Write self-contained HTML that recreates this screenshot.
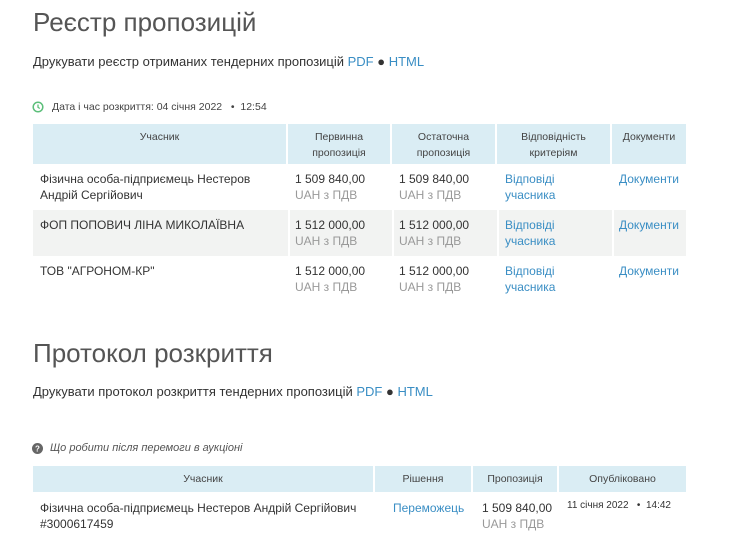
<!DOCTYPE html>
<html><head><meta charset="utf-8"><style>
body{margin:0;width:754px;height:557px;background:#fff;font-family:"Liberation Sans","DejaVu Sans",sans-serif;color:#333;position:relative;overflow:hidden}
.a{position:absolute;white-space:nowrap}
h1{position:absolute;margin:0;font-weight:normal;font-size:26px;color:#555;left:33px}
.l{color:#3a8ec4}
.c{position:absolute;box-sizing:border-box;font-size:12px;line-height:16px;white-space:nowrap}
.h{background:#daedf4;color:#444;text-align:center;font-size:10.5px;line-height:16px;border-right:2px solid #fff}
.g{color:#999}
.s{background:#f2f3f2}
</style></head><body>
<h1 style="top:7px">Реєстр пропозицій</h1>
<div class="a" style="left:33px;top:54px;font-size:13px">Друкувати реєстр отриманих тендерних пропозицій <span class="l">PDF</span> ● <span class="l">HTML</span></div>
<svg class="a" style="left:32px;top:101px" width="12" height="12" viewBox="0 0 12 12"><circle cx="6" cy="6" r="4.8" fill="none" stroke="#5cbf7a" stroke-width="1.5"/><path d="M6 3.5V6.3L7.8 7.5" stroke="#5cbf7a" stroke-width="1.3" fill="none"/></svg>
<div class="a" style="left:52px;top:101px;font-size:10.5px;color:#444">Дата і час розкриття: 04 січня 2022 &nbsp; • &nbsp;12:54</div>

<div class="c h" style="left:33px;top:124px;width:255px;height:40px;padding-top:5px">Учасник</div>
<div class="c h" style="left:288px;top:124px;width:104px;height:40px;padding-top:5px">Первинна<br>пропозиція</div>
<div class="c h" style="left:392px;top:124px;width:105px;height:40px;padding-top:5px">Остаточна<br>пропозиція</div>
<div class="c h" style="left:497px;top:124px;width:115px;height:40px;padding-top:5px">Відповідність<br>критеріям</div>
<div class="c h" style="left:612px;top:124px;width:74px;height:40px;padding-top:5px;border-right:0">Документи</div>

<div class="c s" style="left:33px;top:210px;width:653px;height:46px"></div>
<div class="c" style="left:288px;top:210px;width:2px;height:46px;background:#fff"></div>
<div class="c" style="left:392px;top:210px;width:2px;height:46px;background:#fff"></div>
<div class="c" style="left:497px;top:210px;width:2px;height:46px;background:#fff"></div>
<div class="c" style="left:612px;top:210px;width:2px;height:46px;background:#fff"></div>

<div class="c" style="left:40px;top:171px">Фізична особа-підприємець Нестеров<br>Андрій Сергійович</div>
<div class="c" style="left:295px;top:171px">1 509 840,00<br><span class="g">UAH з ПДВ</span></div>
<div class="c" style="left:399px;top:171px">1 509 840,00<br><span class="g">UAH з ПДВ</span></div>
<div class="c l" style="left:505px;top:171px">Відповіді<br>учасника</div>
<div class="c l" style="left:619px;top:171px">Документи</div>

<div class="c" style="left:40px;top:217px">ФОП ПОПОВИЧ ЛІНА МИКОЛАЇВНА</div>
<div class="c" style="left:295px;top:217px">1 512 000,00<br><span class="g">UAH з ПДВ</span></div>
<div class="c" style="left:399px;top:217px">1 512 000,00<br><span class="g">UAH з ПДВ</span></div>
<div class="c l" style="left:505px;top:217px">Відповіді<br>учасника</div>
<div class="c l" style="left:619px;top:217px">Документи</div>

<div class="c" style="left:40px;top:263px">ТОВ "АГРОНОМ-КР"</div>
<div class="c" style="left:295px;top:263px">1 512 000,00<br><span class="g">UAH з ПДВ</span></div>
<div class="c" style="left:399px;top:263px">1 512 000,00<br><span class="g">UAH з ПДВ</span></div>
<div class="c l" style="left:505px;top:263px">Відповіді<br>учасника</div>
<div class="c l" style="left:619px;top:263px">Документи</div>

<h1 style="top:338px">Протокол розкриття</h1>
<div class="a" style="left:33px;top:384px;font-size:13px">Друкувати протокол розкриття тендерних пропозицій <span class="l">PDF</span> ● <span class="l">HTML</span></div>
<svg class="a" style="left:32px;top:443px" width="11" height="11" viewBox="0 0 11 11"><circle cx="5.5" cy="5.5" r="5.5" fill="#666"/><text x="5.5" y="8.5" font-size="8" font-weight="bold" text-anchor="middle" fill="#fff" font-family="Liberation Sans">?</text></svg>
<div class="a" style="left:50px;top:442px;font-size:11px;font-style:italic;color:#555">Що робити після перемоги в аукціоні</div>

<div class="c h" style="left:33px;top:466px;width:342px;height:26px;padding-top:5px">Учасник</div>
<div class="c h" style="left:375px;top:466px;width:98px;height:26px;padding-top:5px">Рішення</div>
<div class="c h" style="left:473px;top:466px;width:86px;height:26px;padding-top:5px">Пропозиція</div>
<div class="c h" style="left:559px;top:466px;width:127px;height:26px;padding-top:5px;border-right:0">Опубліковано</div>

<div class="c" style="left:40px;top:500px">Фізична особа-підприємець Нестеров Андрій Сергійович<br>#3000617459</div>
<div class="c l" style="left:393px;top:500px">Переможець</div>
<div class="c" style="left:482px;top:500px">1 509 840,00<br><span class="g">UAH з ПДВ</span></div>
<div class="c" style="left:567px;top:498px;font-size:10px">11 січня 2022 &nbsp; • &nbsp;14:42</div>
</body></html>
